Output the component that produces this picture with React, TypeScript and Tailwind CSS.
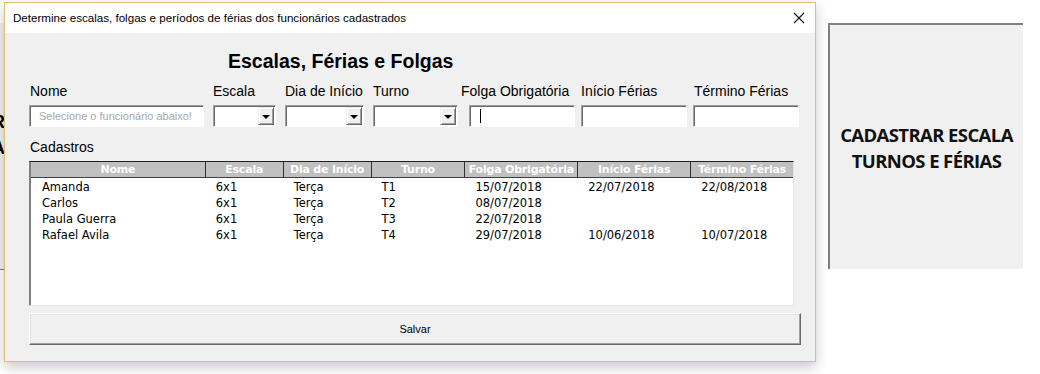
import React from "react";

const rows = [
  ["Amanda", "6x1", "Terça", "T1", "15/07/2018", "22/07/2018", "22/08/2018"],
  ["Carlos", "6x1", "Terça", "T2", "08/07/2018", "", ""],
  ["Paula Guerra", "6x1", "Terça", "T3", "22/07/2018", "", ""],
  ["Rafael Avila", "6x1", "Terça", "T4", "29/07/2018", "10/06/2018", "10/07/2018"],
];

const cols = [
  { name: "Nome", w: "w-[175px]" },
  { name: "Escala", w: "w-[78px]" },
  { name: "Dia de Início", w: "w-[88px]" },
  { name: "Turno", w: "w-[94px]" },
  { name: "Folga Obrigatória", w: "w-[113px]" },
  { name: "Início Férias", w: "w-[113px]" },
  { name: "Término Férias", w: "w-[102px]" },
];

const sunken =
  "border border-t-[#a0a0a0] border-l-[#a0a0a0] border-b-white border-r-white shadow-[inset_1px_1px_0_#696969] bg-white";

function Combo({ w }: { w: string }) {
  return (
    <div className={`${w} h-[22px] ${sunken} flex justify-end p-[1px]`}>
      <div className="w-[16px] h-full bg-[#f0f0f0] border border-t-[#f0f0f0] border-l-[#f0f0f0] border-b-[#696969] border-r-[#696969] shadow-[inset_1px_1px_0_#ffffff,inset_-1px_-1px_0_#a0a0a0] flex items-center justify-center">
        <div className="w-0 h-0 border-l-[4px] border-r-[4px] border-t-[4px] border-l-transparent border-r-transparent border-t-black mt-[1px]" />
      </div>
    </div>
  );
}

function TextBox({ w, children }: { w: string; children?: React.ReactNode }) {
  return <div className={`${w} h-[22px] ${sunken} flex items-center`}>{children}</div>;
}

export default function App() {
  const sans = { fontFamily: '"Liberation Sans", Arial, sans-serif' };
  return (
    <div className="relative w-[1040px] h-[374px] bg-white overflow-hidden" style={sans}>
      {/* background left sheet button (partially hidden) */}
      <div className="absolute left-0 top-[23px] w-[6px] h-[247px] bg-[#f0f0f0] border-b border-[#808080] overflow-hidden">
        <div className="absolute right-[1px] top-[86px] text-[18px] font-bold leading-[26px] text-black text-right w-[40px]">
          <div>AR</div>
          <div>IA</div>
        </div>
      </div>

      {/* background right button */}
      <div className="absolute left-[828px] top-[23px] w-[195px] h-[246px] bg-[#f0f0f0] border-l-2 border-t-2 border-[#808080] flex flex-col items-center justify-center">
        <div className="text-[18.5px] font-bold leading-[26px] text-[#111] text-center mt-[1px]" style={{ fontFamily: '"Open Sans", "Liberation Sans", sans-serif', letterSpacing: "-0.6px" }}>
          <div>CADASTRAR ESCALA</div>
          <div>TURNOS E FÉRIAS</div>
        </div>
      </div>

      {/* dialog */}
      <div className="absolute left-[4px] top-[2px] w-[812px] h-[360px] border border-[#e0bf75] bg-[#f0f0f0] shadow-[0_5px_12px_rgba(0,0,0,0.22)] flex flex-col">
        {/* title bar */}
        <div className="h-[30px] bg-white flex items-center justify-between pl-[8px] pr-[10px]">
          <span className="text-[11.6px] text-black">
            Determine escalas, folgas e períodos de férias dos funcionários cadastrados
          </span>
          <svg width="12" height="12" viewBox="0 0 12 12">
            <path d="M1 1 L11 11 M11 1 L1 11" stroke="#111" strokeWidth="1.1" />
          </svg>
        </div>

        {/* body */}
        <div className="flex flex-col">
          <div className="mt-[16px] h-[24px] pl-[223px] text-[19.5px] font-bold leading-[24px] text-black">
            Escalas, Férias e Folgas
          </div>

          {/* labels */}
          <div className="mt-[9px] h-[18px] flex pl-[25px] text-[14px] leading-[18px] text-black whitespace-nowrap">
            <div className="w-[183px]">Nome</div>
            <div className="w-[72px]">Escala</div>
            <div className="w-[88px]">Dia de Início</div>
            <div className="w-[88px]">Turno</div>
            <div className="w-[120px]">Folga Obrigatória</div>
            <div className="w-[113px]">Início Férias</div>
            <div>Término Férias</div>
          </div>

          {/* inputs */}
          <div className="mt-[5px] flex pl-[24px]">
            <TextBox w="w-[175px]">
              <span className="pl-[9px] text-[11px] text-[#a8a8a8]">Selecione o funcionário abaixo!</span>
            </TextBox>
            <div className="ml-[9px]"><Combo w="w-[63px]" /></div>
            <div className="ml-[9px]"><Combo w="w-[79px]" /></div>
            <div className="ml-[9px]"><Combo w="w-[85px]" /></div>
            <div className="ml-[11px]">
              <TextBox w="w-[106px]">
                <div className="ml-[10px] w-[1px] h-[14px] bg-black" />
              </TextBox>
            </div>
            <div className="ml-[6px]"><TextBox w="w-[106px]" /></div>
            <div className="ml-[6px]"><TextBox w="w-[106px]" /></div>
          </div>

          <div className="mt-[11px] h-[18px] pl-[25px] text-[14px] leading-[18px] text-black">Cadastros</div>

          {/* listbox */}
          <div className="mt-[5px] ml-[24px] w-[765px] h-[145px] border border-t-[#202020] border-l-[#808080] border-b-[#e3e3e3] border-r-[#e3e3e3] shadow-[inset_1px_0_0_#808080] bg-white flex flex-col" style={{ fontFamily: '"DejaVu Sans", sans-serif' }}>
            <div className="h-[16px] bg-[#c0c0c0] border-b border-[#404040] flex ml-[1px]">
              {cols.map((c, i) => (
                <div
                  key={c.name}
                  className={`${c.w} h-full flex items-center justify-center text-[11px] font-bold text-white leading-none whitespace-nowrap ${i < cols.length - 1 ? "border-r border-[#303030]" : ""}`}
                  style={{ letterSpacing: "-0.2px" }}
                >
                  {c.name}
                </div>
              ))}
            </div>
            <div className="flex flex-col pt-[1px] ml-[1px]">
              {rows.map((r) => (
                <div key={r[0]} className="h-[16px] flex text-[11.5px] text-black leading-[16px]">
                  {r.map((v, i) => (
                    <div key={i} className={`${cols[i].w} pl-[10px] whitespace-nowrap ${i === 0 ? "pl-[11px]" : ""}`}>
                      {v}
                    </div>
                  ))}
                </div>
              ))}
            </div>
          </div>

          {/* Salvar */}
          <div className="mt-[7px] ml-[24px] w-[772px] h-[32px] bg-[#f0f0f0] border border-t-white border-l-white border-b-[#696969] border-r-[#696969] shadow-[inset_-1px_-1px_0_#a0a0a0,inset_1px_1px_0_#e3e3e3] flex items-center justify-center">
            <span className="text-[11px] text-black">Salvar</span>
          </div>
        </div>
      </div>
    </div>
  );
}
